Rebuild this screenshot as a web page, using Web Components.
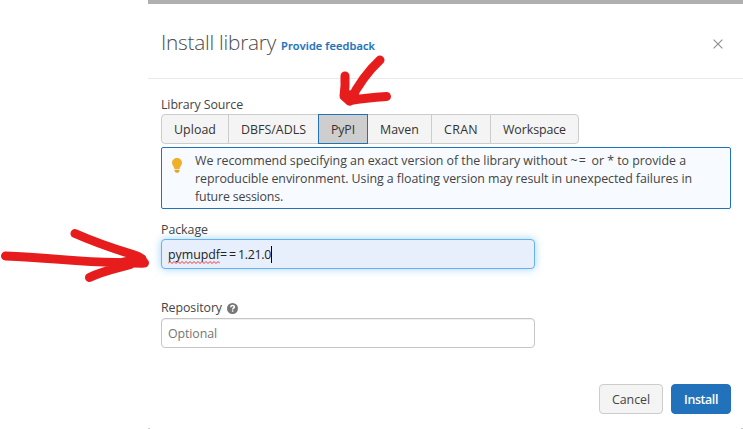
<!DOCTYPE html>
<html lang="en"><head><meta charset="utf-8"><title>Install library</title>
<style>
body{margin:0;background:#fff;width:743px;height:429px;overflow:hidden;position:relative;font:12.4px/18px "Open Sans","Noto Sans",sans-serif;color:#444}
</style></head><body>
<install-dialog></install-dialog>
<ink-arrows></ink-arrows>
<script>
function define(name, html, init){
  const t=document.createElement('template'); t.innerHTML=html;
  customElements.define(name, class extends HTMLElement{
    connectedCallback(){
      if(this.shadowRoot) return;
      this.attachShadow({mode:'open'}).append(t.content.cloneNode(true));
      if(init) init(this);
    }
  });
}
// Text run whose tracking is adjusted to the advance width in its "w" attribute.
define('fit-text', `<style>:host{display:inline-block;white-space:pre}span{display:inline-block}</style><span><slot></slot></span>`, el=>{
  const s=el.shadowRoot.querySelector('span'), w=+el.getAttribute('w'), n=el.textContent.length;
  const natural=s.getBoundingClientRect().width;
  el.style.width=w+'px';
  s.style.letterSpacing=((w-natural)/n)+'px';
});
define('tab-button', `<style>
:host{display:flex;box-sizing:border-box;height:30px;justify-content:center;align-items:center;background:#f4f4f4;border:1px solid #ccc;margin-left:-1px;padding-top:1px;color:#333}
:host(:first-child){margin-left:0;border-radius:4px 0 0 4px}
:host(:last-child){border-radius:0 4px 4px 0}
:host([active]){background:#cecece;border-color:#2272b8;position:relative}
</style><slot></slot>`);
define('tab-group', `<style>:host{display:flex;height:30px;margin-bottom:3px}</style><slot></slot>`);
define('info-note', `<style>
:host{display:flex;box-sizing:border-box;height:62px;border:1px solid #2272b8;border-radius:2px;background:#f7fbff;padding:4px 0 0 10px;color:#444}
svg{flex:none;margin:6px 13px 0 0}
div{display:flex;flex-direction:column}
</style><svg width="10" height="15" viewBox="0 0 10 15"><path fill="#f0b02a" d="M5 0C2.2 0 0 2.1 0 4.8c0 2.6 2 3.5 2.5 6.2h5C8 8.300 10 7.400 10 4.800 10 2.100 7.800 0 5 0Z"/><path fill="#dfa629" d="M2.500 11.700h5v1.200L6.200 14.800H3.800L2.500 12.900Z"/></svg><div><slot></slot></div>`);
define('text-field', `<style>
:host{display:flex;align-items:center;box-sizing:border-box;width:374px;height:30px;border:1px solid #c6c6c6;border-radius:4px;padding:1px 6px 0;color:#757575;background:#fff;box-shadow:inset 0 1px 1px #0001}
:host([focused]){background:#e8effc;border-color:#66b1ee;color:#222;box-shadow:0 0 8px #66b8f099}
i{display:none;width:1px;height:17px;background:#000}
:host([focused]) i{display:block}
</style><slot></slot><i></i>`);
define('spell-mark', `<style>:host{display:inline-block;position:relative}
svg{position:absolute;left:0;bottom:0}</style><slot></slot><svg width="52" height="3" viewBox="0 0 52 3"><path fill="none" stroke="#e22" stroke-width=".9" d="M0 2.500l2-2 2 2 2-2 2 2 2-2 2 2 2-2 2 2 2-2 2 2 2-2 2 2 2-2 2 2 2-2 2 2 2-2 2 2 2-2 2 2 2-2 2 2 2-2 2 2 2-2 2 2"/></svg>`);
define('push-button', `<style>
:host{display:flex;box-sizing:border-box;height:30px;width:64px;align-items:center;justify-content:center;border:1px solid #ccc;border-radius:4px;background:#f4f4f4;color:#444;padding-top:1px}
:host([primary]){width:60px;background:#2272bb;border-color:#2272bb;color:#fff;font-weight:600}
</style><slot></slot>`);
define('help-icon', `<style>:host{display:block;width:11px;height:11px}svg{display:block}</style><svg width="11" height="11" viewBox="0 0 11 11"><circle cx="5.500" cy="5.500" r="5.500" fill="#777"/><path d="M3.700 4.300C3.800 2.900 4.600 2.500 5.600 2.500c1.100 0 1.800.6 1.800 1.400 0 1.300-1.700 1.300-1.700 2.500" fill="none" stroke="#fff" stroke-width="1.500"/><path fill="#fff" d="M4.900 7.300h1.500v1.400H4.900z"/></svg>`);
define('install-dialog', `<style>
:host{display:block;margin-left:148px;width:595px;height:429px}
.dialog{box-sizing:border-box;height:429px;border-top:4px solid #b0b0b0;background:#fff}
header{box-sizing:border-box;height:75px;border-bottom:1px solid #e9e9e9;padding:0 20px 0 13px;display:flex;align-items:center}
h2{margin:2px 5px 0 0;font-weight:300;font-size:20.800px;line-height:30px;color:#4c4c4c}
.link{font-size:11px;font-weight:600;color:#2272b8;-webkit-text-stroke:.2px #2272b8;margin-top:10px}
header svg{margin-left:auto;margin-top:6px}
main{padding:17px 12px 0 13px}
label{display:flex;gap:5px;align-items:center;height:18px}
.pkg{margin-top:12px}.repo{margin-top:30px;margin-bottom:1px}
footer{display:flex;justify-content:flex-end;gap:8px;padding:36px 12px 0}
.ends{display:flex;justify-content:space-between;margin-top:14px}
.ends b{width:2px;height:1px;background:#ccc}
</style><div class="dialog">
<header><h2><fit-text w="115">Install library</fit-text></h2><fit-text class="link" w="94">Provide feedback</fit-text>
<svg width="10" height="10" viewBox="0 0 10 10"><path d="M.6.6l8.800 8.800M9.400.6L.6 9.400" stroke="#8b8b8b" stroke-width="1.100"/></svg></header>
<main><label><fit-text w="82">Library Source</fit-text></label>
<tab-group><tab-button style="width:68px"><fit-text w="42">Upload</fit-text></tab-button><tab-button style="width:91px"><fit-text w="65">DBFS/ADLS</fit-text></tab-button><tab-button active style="width:50px"><fit-text w="24">PyPI</fit-text></tab-button><tab-button style="width:65px"><fit-text w="39">Maven</fit-text></tab-button><tab-button style="width:60px"><fit-text w="34">CRAN</fit-text></tab-button><tab-button style="width:89px"><fit-text w="63">Workspace</fit-text></tab-button></tab-group>
<info-note><div style="display:flex"><fit-text w="375.5">We recommend specifying an exact version of the library without </fit-text><fit-text w="21">~= </fit-text><fit-text w="94.500">or * to provide a</fit-text></div><fit-text w="497">reproducible environment. Using a floating version may result in unexpected failures in</fit-text><fit-text w="88">future sessions.</fit-text></info-note>
<label class="pkg"><fit-text w="47">Package</fit-text></label>
<text-field focused><spell-mark><fit-text w="52">pymupdf</fit-text></spell-mark><fit-text w="18">==</fit-text><fit-text w="33">1.21.0</fit-text></text-field>
<label class="repo"><fit-text w="61">Repository</fit-text><help-icon></help-icon></label>
<text-field><fit-text w="49">Optional</fit-text></text-field></main>
<footer><push-button><fit-text w="38">Cancel</fit-text></push-button><push-button primary><fit-text w="34">Install</fit-text></push-button></footer>
<div class="ends"><b></b><b></b></div></div>`);
// Hand-drawn markers floating over the dialog.
define('ink-arrows', `<style>:host{position:absolute;inset:0}svg{display:block}</style>
<svg width="743" height="429" fill="none" stroke="#e71d1d" stroke-width="9" stroke-linecap="round" stroke-linejoin="round">
<path d="M345 76v10l-1 10 6 5C357 87 366 73 380 60M350 100.500c12-2 22-3 36.500-4"/><path d="M345 94l-.5 2 5 5 5-5z"/>
<path d="M5.500 256c45 1.500 70 6 110 6.500l29 .5M75 233.500c25 11 38 15 58 21 7 2 10 4 10 8M89.500 277.500c12-6 24-8.500 41-13"/><path d="M124 262l18-3v4z"/></svg>`);
</script></body></html>
